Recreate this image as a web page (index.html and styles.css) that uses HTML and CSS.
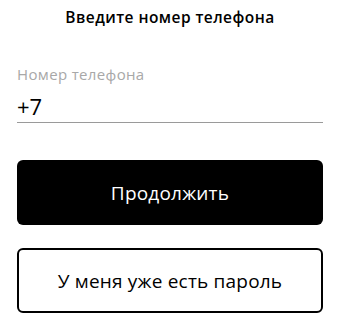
FILE: index.html
```html
<!DOCTYPE html>
<html lang="ru">
<head>
<meta charset="utf-8">
<link rel="stylesheet" href="styles.css">
</head>
<body>
<div class="screen">
  <h1 class="title">Введите номер телефона</h1>
  <div class="field">
    <div class="field-label">Номер телефона</div>
    <div class="field-value">+7</div>
  </div>
  <button class="btn btn-primary">Продолжить</button>
  <button class="btn btn-outline">У меня уже есть пароль</button>
</div>
</body>
</html>
```

FILE: styles.css
```css
html, body {
  margin: 0;
  padding: 0;
  background: #fff;
}
body {
  font-family: "Open Sans", "Noto Sans", sans-serif;
  color: #000;
}
.screen {
  width: 337px;
  height: 320px;
  padding: 0 14px 0 17px;
  box-sizing: border-box;
  display: flex;
  flex-direction: column;
}
.title {
  margin: 6px 0 0;
  font-size: 15.5px;
  font-weight: 600;
  letter-spacing: 0.45px;
  text-align: center;
  line-height: 22px;
}
.field {
  margin-top: 36px;
  border-bottom: 1px solid #9a9a9a;
  padding-bottom: 3px;
}
.field-label {
  font-size: 15px;
  letter-spacing: 0.35px;
  color: #a8a8a8;
  line-height: 20px;
}
.field-value {
  font-size: 22px;
  line-height: 26px;
  margin-top: 9px;
}
.btn {
  font-family: inherit;
  display: block;
  width: 100%;
  height: 65px;
  border-radius: 6px;
  font-size: 19px;
  letter-spacing: 0.2px;
  cursor: pointer;
}
.btn-primary {
  margin-top: 37px;
  background: #000;
  color: #fff;
  border: none;
}
.btn-outline {
  margin-top: 23px;
  background: #fff;
  color: #000;
  border: 2px solid #000;
}
```
